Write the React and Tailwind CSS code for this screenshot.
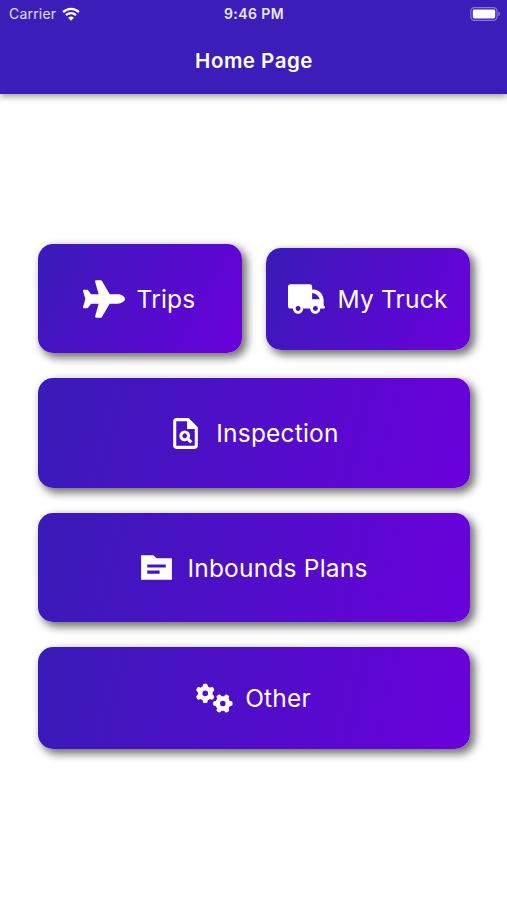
import { FaPlane } from 'react-icons/fa';
import { FaGears } from 'react-icons/fa6';
import { MdOutlinePlagiarism } from 'react-icons/md';

function TopicIcon({ className }) {
  return (
    <svg viewBox="0 0 24 24" fill="currentColor" className={className}>
      <path
        fillRule="evenodd"
        d="M22 6H12l-2-2H2v16h20V6zM14 16H6v-2h8v2zm4-4H6v-2h12v2z"
      />
    </svg>
  );
}

function TruckIcon({ className }) {
  return (
    <svg viewBox="0 0 112 90" fill="currentColor" className={className}>
      <path
        fillRule="evenodd"
        d="M8 0H66Q73 0 73 7V16H80C97 18 106 31 108 47V66H109Q112 66 112 70T109 74H98A15.5 15.5 0 0 1 67 74H46A15.5 15.5 0 0 1 15 74H8Q0 74 0 66V8Q0 0 8 0zM73 27V46H96C93 36 85 28 73 27zM30.500 66a7.500 7.500 0 1 0 0 15a7.500 7.500 0 1 0 0-15zM83 66a7.500 7.500 0 1 0 0 15a7.500 7.500 0 1 0 0-15z"
      />
    </svg>
  );
}

function StatusBar() {
  return (
    <div className="grid grid-cols-3 items-center h-[27px] pl-[9px] pr-[6px] text-[14px] leading-none">
      <div className="flex items-center gap-[6px]">
        <span className="tracking-[0.2px] text-white/85">Carrier</span>
        <svg viewBox="0 0 18 14" className="w-[18px] h-[14px]" fill="none">
          <path
            d="M1.1 5.1a11.4 11.4 0 0 1 15.8 0M4 8.1a7.3 7.3 0 0 1 10 0"
            stroke="white"
            strokeWidth="2.3"
          />
          <path d="M9 13.7 6.1 10.8a4.2 4.2 0 0 1 5.8 0z" fill="white" />
        </svg>
      </div>
      <span className="-ml-[2px] text-center font-semibold text-white/90 text-[14px] tracking-[0.4px]">
        9:46 PM
      </span>
      <div className="flex items-center justify-end">
        <svg viewBox="0 0 31 14" className="w-[31px] h-[14px]" fill="none">
          <rect
            x="0.8"
            y="0.6"
            width="26.2"
            height="12.8"
            rx="3.6"
            stroke="white"
            strokeOpacity="0.4"
            strokeWidth="1.2"
          />
          <rect x="2.8" y="2.6" width="22.4" height="8.8" rx="1.4" fill="white" />
          <path d="M28.4 4.8v4.4a2.4 2.4 0 0 0 0-4.4z" fill="white" fillOpacity="0.5" />
        </svg>
      </div>
    </div>
  );
}

function Header() {
  return (
    <header className="h-[94px] bg-[#3b1eb9] text-white shadow-[0_3px_6px_rgba(0,0,0,0.35)]">
      <StatusBar />
      <h1 className="h-[67px] pt-[19px] pl-px text-center text-[20.5px] leading-[30px] font-semibold tracking-[0.5px]">
        Home Page
      </h1>
    </header>
  );
}

function MenuCard({ label, icon, className }) {
  return (
    <button
      className={`flex items-center justify-center rounded-[15px] from-[#381bb7] to-[#6a00db] text-white shadow-[4px_4px_8px_1px_rgba(0,0,0,0.55)] ${className}`}
    >
      {icon}
      <span className="text-[24.5px] leading-[30px] tracking-[0.2px]">{label}</span>
    </button>
  );
}

export default function App() {
  return (
    <div className="h-[900px] w-full overflow-hidden bg-white font-['Inter',sans-serif]">
      <Header />
      <main className="flex flex-col gap-[25px] pt-[150px] pl-[38px] pr-[37px]">
        <div className="grid grid-cols-2 items-center gap-6">
          <MenuCard
            label="Trips"
            className="h-[109px] pr-[2px] bg-linear-118/srgb"
            icon={<FaPlane className="w-[42px] h-[38px] mr-[12px]" />}
          />
          <MenuCard
            label="My Truck"
            className="h-[102px] bg-linear-117/srgb"
            icon={<TruckIcon className="w-[37px] h-[30px] mr-[12px]" />}
          />
        </div>
        <MenuCard
          label="Inspection"
          className="h-[110px] pr-[2px] bg-linear-104/srgb"
          icon={<MdOutlinePlagiarism className="size-[37px] mr-[12px]" />}
        />
        <MenuCard
          label="Inbounds Plans"
          className="h-[109px] pr-[2px] bg-linear-104/srgb"
          icon={<TopicIcon className="size-[37px] mr-[12px]" />}
        />
        <MenuCard
          label="Other"
          className="h-[102px] pr-px bg-linear-103/srgb"
          icon={<FaGears className="w-[37px] h-[30px] mr-[12px]" />}
        />
      </main>
    </div>
  );
}
